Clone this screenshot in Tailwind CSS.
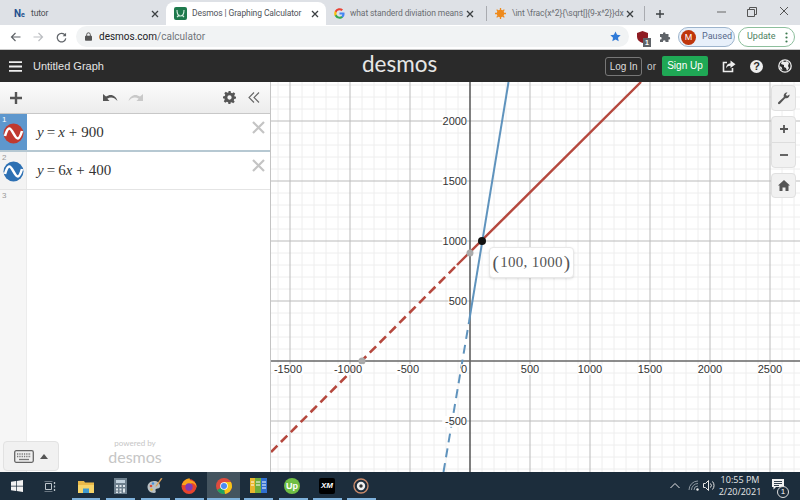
<!DOCTYPE html>
<html lang="en">
<head>
    <meta charset="UTF-8">
    <title>Desmos | Graphing Calculator</title>
    <script src="https://cdn.jsdelivr.net/npm/@tailwindcss/browser@4"></script>
</head>
<body class="w-[800px] h-[500px] overflow-hidden bg-white font-['Liberation_Sans',sans-serif]">
    <div class="flex flex-col h-[500px]">

        <!-- browser tabs -->
        <div class="flex h-[25px] pt-[2px] bg-[#dee1e6] text-[8.500px] tracking-[-.1px] text-[#4a4d52] font-['Roboto',sans-serif]">
            <div class="w-[166px] flex items-center pl-[14px] pr-[7px]">
                <span class="w-[17px] text-[10px] font-bold text-[#24508f]">N<span class="text-[7px]">e</span></span>
                <span class="flex-1">tutor</span>
                <svg width="8" height="8" viewBox="0 0 8 8"><path d="M1 1l6 6M7 1L1 7" stroke="#3c4043" stroke-width="1.3"/></svg>
            </div>
            <div class="w-[160px] flex items-center pl-[8px] pr-[7px] bg-white rounded-t-lg text-[#50535a]">
                <svg class="mr-[5px] shrink-0" width="13" height="13" viewBox="0 0 13 13"><rect width="13" height="13" rx="2" fill="#1f7a4d"/><path d="M3 3c0 5 2 6 3.500 6S10 8 10 3M3 10l2.500-2M10 10L8 8" stroke="#d8efe2" stroke-width="1.100" fill="none"/></svg>
                <span class="flex-1 whitespace-nowrap">Desmos | Graphing Calculator</span>
                <svg class="shrink-0" width="8" height="8" viewBox="0 0 8 8"><path d="M1 1l6 6M7 1L1 7" stroke="#3c4043" stroke-width="1.3"/></svg>
            </div>
            <div class="w-[160px] flex items-center pl-[8px] pr-[8px]">
                <svg class="mr-[5px] shrink-0" width="11" height="11" viewBox="0 0 24 24"><path d="M23 12.300c0-.8-.1-1.600-.2-2.300H12v4.400h6.200a5.300 5.300 0 0 1-2.300 3.500v2.900h3.700c2.200-2 3.400-5 3.400-8.500z" fill="#4285f4"/><path d="M12 23.500c3.100 0 5.700-1 7.600-2.800l-3.700-2.900c-1 .7-2.300 1.100-3.900 1.100-3 0-5.500-2-6.400-4.700H1.800v3A11.500 11.500 0 0 0 12 23.500z" fill="#34a853"/><path d="M5.600 14.200a7 7 0 0 1 0-4.400v-3H1.800a11.500 11.500 0 0 0 0 10.400z" fill="#fbbc05"/><path d="M12 5.100c1.700 0 3.200.6 4.400 1.700l3.300-3.300A11.500 11.500 0 0 0 1.800 6.800l3.800 3C6.500 7.100 9 5.100 12 5.100z" fill="#ea4335"/></svg>
                <span class="flex-1 whitespace-nowrap text-[#6a6d72]">what standerd diviation means</span>
                <svg class="shrink-0 mr-[4px]" width="8" height="8" viewBox="0 0 8 8"><path d="M1 1l6 6M7 1L1 7" stroke="#3c4043" stroke-width="1.3"/></svg>
            </div>
            <div class="w-[159px] flex items-center pl-[8px] pr-[7px] my-[4px] border-l border-r border-[#a9abb0]">
                <svg class="mr-[6px] shrink-0" width="11" height="11" viewBox="0 0 12 12"><circle cx="6" cy="6" r="4" fill="#ee8a1d"/><circle cx="6" cy="6" r="1.500" fill="#f8c88e"/><path d="M6 0v12M0 6h12M1.800 1.800l8.400 8.400M10.200 1.800l-8.400 8.400" stroke="#ee8a1d" stroke-width="1.400"/></svg>
                <span class="flex-1 whitespace-nowrap text-[#6a6d72]">\int \frac{x^2}{\sqrt[]{9-x^2}}dx</span>
                <svg class="shrink-0 mr-[3px]" width="8" height="8" viewBox="0 0 8 8"><path d="M1 1l6 6M7 1L1 7" stroke="#3c4043" stroke-width="1.3"/></svg>
            </div>
            <div class="w-[30px] flex items-center justify-center">
                <svg width="10" height="10" viewBox="0 0 10 10"><path d="M5 1v8M1 5h8" stroke="#3c4043" stroke-width="1.400"/></svg>
            </div>
            <div class="flex-1 flex items-start justify-end pt-[4px]">
                <svg class="mr-[21px] mt-[5px]" width="9" height="2" viewBox="0 0 9 2"><path d="M0 1h9" stroke="#666" stroke-width="1"/></svg>
                <svg class="mr-[22px] mt-[1px]" width="10" height="10" viewBox="0 0 10 10"><path d="M.5 2.500h7v7h-7zM2.500 2.500v-2h7v7h-2" fill="none" stroke="#555" stroke-width="1"/></svg>
                <svg class="mr-[11px]" width="10" height="10" viewBox="0 0 10 10"><path d="M1 1l8 8M9 1L1 9" stroke="#555" stroke-width="1"/></svg>
            </div>
        </div>

        <!-- address bar -->
        <div class="relative flex items-center h-[25px] bg-white border-b border-[#c9c9c9] text-[#5f6368]">
            <svg class="ml-[10px]" width="11" height="10" viewBox="0 0 11 10"><path d="M10.500 5H1.500M5.500 1L1.500 5l4 4" fill="none" stroke="#5f6368" stroke-width="1.200"/></svg>
            <svg class="ml-[12px]" width="11" height="10" viewBox="0 0 11 10"><path d="M.5 5h9M5.500 1l4 4-4 4" fill="none" stroke="#bcbec2" stroke-width="1.200"/></svg>
            <svg class="ml-[12px]" width="11" height="11" viewBox="0 0 12 12"><path d="M10 3.500A4.700 4.700 0 1 0 10.700 7" fill="none" stroke="#5f6368" stroke-width="1.300"/><path d="M11 .8v3.700H7.300z" fill="#5f6368"/></svg>
            <div class="absolute left-[76px] top-[1px] w-[553px] h-[21px] rounded-full bg-[#f1f3f4] flex items-center pl-[9px] font-['Roboto',sans-serif] text-[10px]">
                <svg width="7" height="9" viewBox="0 0 7 9"><path d="M1.700 4V2.600a1.800 1.800 0 0 1 3.600 0V4" fill="none" stroke="#555" stroke-width="1"/><rect y="3.700" width="7" height="5" rx=".8" fill="#555"/></svg>
                <span class="ml-[7px] text-[#202124]">desmos.com<span class="text-[#71757a]">/calculator</span></span>
                <svg class="ml-auto mr-[8px]" width="11" height="11" viewBox="0 0 24 24"><path d="M12 1l3.400 7.300 7.900.9-5.900 5.400 1.600 7.900L12 18.600l-7 3.900 1.600-7.900L.7 9.200l7.900-.9z" fill="#2f7ad8"/></svg>
            </div>
            <div class="ml-auto flex items-center">
                <div class="relative w-[13px] h-[13px] mr-[9px]">
                    <svg width="11" height="12" viewBox="0 0 11 12"><path d="M5.500 0L11 2v4c0 3-2.500 5-5.500 6C2.500 11 0 9 0 6V2z" fill="#8e1c23"/></svg>
                    <span class="absolute left-[6px] top-[7px] w-[8px] h-[9px] bg-[#5f6368] text-white text-[7px] leading-[9px] text-center font-bold">1</span>
                </div>
                <svg class="mr-[7px]" width="12" height="12" viewBox="0 0 12 12"><path d="M1 3h3a1.300 1.300 0 1 1 2.500 0h3v3a1.300 1.300 0 1 1 0 2.500V11H6.500a1.300 1.300 0 1 0-2.500 0H1V8.500a1.300 1.300 0 1 0 0-2.500z" fill="#5f6368"/></svg>
                <div class="flex items-center w-[57px] h-[20px] rounded-full border border-[#9db4cc] bg-[#e8f0fa] pl-[2px]">
                    <span class="w-[15px] h-[15px] rounded-full bg-[#bf360c] text-white text-[9px] leading-[15px] text-center">M</span>
                    <span class="ml-[6px] text-[9px] text-[#56688a] font-['Roboto',sans-serif]">Paused</span>
                </div>
                <div class="flex items-center w-[57px] h-[20px] ml-[3px] mr-[5px] rounded-full border border-[#8dbf9d] pl-[8px] text-[9px] text-[#4e7f5f] font-['Roboto',sans-serif]">
                    Update
                    <svg class="ml-auto mr-[6px]" width="3" height="11" viewBox="0 0 3 11"><circle cx="1.500" cy="1.500" r="1.100" fill="#3c7a50"/><circle cx="1.500" cy="5.500" r="1.100" fill="#3c7a50"/><circle cx="1.500" cy="9.500" r="1.100" fill="#3c7a50"/></svg>
                </div>
            </div>
        </div>

        <!-- desmos header -->
        <div class="relative flex items-center h-[32px] bg-[#2a2a2a] text-white">
            <svg class="ml-[9px]" width="13" height="11" viewBox="0 0 13 11"><path d="M0 1.200h13M0 5.500h13M0 9.800h13" stroke="#eee" stroke-width="1.800"/></svg>
            <span class="ml-[11px] text-[11px] text-[#e4e4e4]">Untitled Graph</span>
            <span class="absolute left-[362px] top-0 text-[22.500px] leading-[28px] font-normal font-['Lato',sans-serif] text-[#e6e6e6]">desmos</span>
            <div class="ml-auto flex items-center">
                <span class="w-[37px] h-[19px] rounded-[3px] border border-[#777] text-[10px] leading-[17px] text-center text-[#ddd]">Log In</span>
                <span class="ml-[5px] text-[10px] text-[#ccc]">or</span>
                <span class="ml-[6px] w-[46px] h-[20px] rounded-[2px] bg-[#1fa855] text-[10px] leading-[20px] text-center">Sign Up</span>
                <svg class="ml-[14px]" width="14" height="13" viewBox="0 0 14 13"><path d="M5 2.500H1.500v9h9V8" fill="none" stroke="#eee" stroke-width="1.600"/><path d="M8.500.5l5 3.700-5 3.800V5.800C6.500 5.800 5 6.500 4 8.500c0-3 1.700-5 4.500-5.200z" fill="#eee"/></svg>
                <span class="ml-[14px] w-[13px] h-[13px] rounded-full bg-[#eee] text-[#2a2a2a] text-[11px] leading-[13px] text-center font-bold">?</span>
                <svg class="ml-[15px] mr-[8px]" width="14" height="14" viewBox="0 0 14 14"><circle cx="7" cy="7" r="6.200" fill="none" stroke="#eee" stroke-width="1.300"/><path d="M4 2l3 1 2-1 2 2-1 3 1 2-2 3-1-3-2-1V6L3 5zM1.500 7l2 1 1 3-2-1z" fill="#eee"/></svg>
            </div>
        </div>

        <!-- calculator -->
        <div class="flex-1 flex min-h-0">
            <div class="w-[271px] flex flex-col relative border-r border-[#c4c4c4]">
                <div class="flex items-center h-[32px] bg-gradient-to-b from-[#fcfcfc] to-[#ececec] border-b border-[#c8c8c8] text-[#555]">
                    <svg class="ml-[10px]" width="12" height="12" viewBox="0 0 12 12"><path d="M6 0v12M0 6h12" stroke="#555" stroke-width="2.400"/></svg>
                    <svg class="ml-[81px]" width="15" height="9" viewBox="0 0 15 9"><path d="M0 1v7h6.500L4.300 5.800C7.500 3.700 11 4.200 14.500 8 13 2.500 8 0 3 3.500z" fill="#555"/></svg>
                    <svg class="ml-[10px]" width="15" height="9" viewBox="0 0 15 9"><path d="M15 1v7H8.500l2.200-2.200C7.500 3.700 4 4.200.5 8 2 2.500 7 0 12 3.500z" fill="#c9c9c9"/></svg>
                    <svg class="ml-[80px]" width="13" height="13" viewBox="0 0 24 24"><path d="M10 0h4l.6 3.200 2.500 1 2.700-1.800 2.800 2.800-1.800 2.700 1 2.500L24 10v4l-3.200.6-1 2.500 1.800 2.700-2.800 2.800-2.700-1.800-2.500 1L14 24h-4l-.6-3.200-2.500-1-2.700 1.800-2.800-2.800 1.800-2.700-1-2.500L0 14v-4l3.200-.6 1-2.500-1.800-2.700 2.800-2.800 2.700 1.800 2.500-1zM12 8a4 4 0 1 0 0 8 4 4 0 0 0 0-8z" fill="#555" fill-rule="evenodd"/></svg>
                    <svg class="ml-[12px]" width="12" height="11" viewBox="0 0 12 11"><path d="M6 .5L1 5.500l5 5M11 .5L6 5.500l5 5" fill="none" stroke="#666" stroke-width="1.100"/></svg>
                </div>
                <div class="flex h-[38px] border-b-2 border-[#b6c8d2]">
                    <div class="w-[27px] bg-[#5e97cd] relative">
                        <span class="absolute left-[2px] top-0 text-[8px] text-white">1</span>
                        <svg class="absolute left-[3px] top-[9px]" width="21" height="21" viewBox="0 0 21 21"><circle cx="10.500" cy="10.500" r="10" fill="#c0392f"/><path d="M2 13c3-10 5-9 8.500-2.500S16 18 19 8" fill="none" stroke="#fff" stroke-width="2.600"/></svg>
                    </div>
                    <div class="flex-1 flex items-center pl-[10px] text-[15px] text-[#333] font-['Liberation_Serif',serif]"><i>y</i><span class="mx-[3px]">=</span><i>x</i><span class="mx-[4px]">+</span>900</div>
                    <svg class="mt-[7px] mr-[5px]" width="13" height="13" viewBox="0 0 13 13"><path d="M1 1l11 11M12 1L1 12" stroke="#c4c4c4" stroke-width="2.200"/></svg>
                </div>
                <div class="flex h-[38px] border-b border-[#e4e4e4]">
                    <div class="w-[27px] bg-[#f3f3f3] border-r border-[#e8e8e8] relative">
                        <span class="absolute left-[2px] top-0 text-[8px] text-[#999]">2</span>
                        <svg class="absolute left-[3px] top-[9px]" width="21" height="21" viewBox="0 0 21 21"><circle cx="10.500" cy="10.500" r="10" fill="#2d70b3"/><path d="M2 13c3-10 5-9 8.500-2.500S16 18 19 8" fill="none" stroke="#fff" stroke-width="2.600"/></svg>
                    </div>
                    <div class="flex-1 flex items-center pl-[10px] text-[15px] text-[#333] font-['Liberation_Serif',serif]"><i>y</i><span class="mx-[3px]">=</span>6<i>x</i><span class="mx-[4px]">+</span>400</div>
                    <svg class="mt-[7px] mr-[5px]" width="13" height="13" viewBox="0 0 13 13"><path d="M1 1l11 11M12 1L1 12" stroke="#c4c4c4" stroke-width="2.200"/></svg>
                </div>
                <div class="flex-1 flex">
                    <div class="w-[27px] bg-[#f6f6f6] border-r border-[#ececec] relative">
                        <span class="absolute left-[2px] top-0 text-[8px] text-[#999]">3</span>
                    </div>
                </div>
                <div class="absolute left-[3px] bottom-[1px] w-[56px] h-[30px] rounded-[4px] bg-[#f1f1f1] border border-[#e2e2e2] flex items-center pl-[10px]">
                    <svg width="20" height="13" viewBox="0 0 20 13"><rect x=".7" y=".7" width="18.600" height="11.600" rx="1.500" fill="#eee" stroke="#666" stroke-width="1.300"/><path d="M3 4h14M3 6.500h14" stroke="#777" stroke-width="1.300" stroke-dasharray="1.300 1"/><path d="M5 9.500h10" stroke="#777" stroke-width="1.300"/></svg>
                    <svg class="ml-[6px]" width="8" height="5" viewBox="0 0 8 5"><path d="M4 0l4 5H0z" fill="#555"/></svg>
                </div>
                <div class="absolute left-[105px] bottom-[6px] w-[60px] text-center text-[#c6c6c6] font-['Lato',sans-serif]">
                    <div class="text-[8px] leading-[10px]">powered by</div>
                    <div class="text-[16px] leading-[19px] -mt-[1px]">desmos</div>
                </div>
            </div>

            <!-- graph -->
            <div class="flex-1 relative overflow-hidden">
                <svg id="graph" class="block" width="529" height="390" viewBox="271 82 529 390"></svg>
                <div class="absolute left-[218px] top-[165px] w-[85px] h-[31px] rounded-[4px] bg-white border border-[#e8e8e8] shadow-sm flex items-center justify-center text-[15px] tracking-[.3px] text-[#555] font-['Liberation_Serif',serif]"><span class="text-[19px] mr-[1px] leading-none">(</span>100, 1000<span class="text-[19px] ml-[1px] leading-none">)</span></div>
                <div class="absolute right-[4px] top-[3px] flex flex-col">
                    <div class="w-[25px] h-[26px] rounded-[4px] bg-[#f1f1f1] border border-[#e0e0e0] flex items-center justify-center">
                        <svg width="13" height="13" viewBox="0 0 13 13"><path d="M12.500 2.500c.5 2-1.500 4.500-4.300 3.700L3 11.800c-1.200 1.200-2.800-.4-1.700-1.600L6.900 5C6 2.200 8.500.2 10.500.6L8.800 2.500 10 4z" fill="#555"/></svg>
                    </div>
                    <div class="mt-[5px] w-[25px] h-[52px] rounded-[4px] bg-[#f1f1f1] border border-[#e0e0e0] flex flex-col">
                        <div class="flex-1 flex items-center justify-center border-b border-[#ddd]"><svg width="10" height="10" viewBox="0 0 10 10"><path d="M5 1v8M1 5h8" stroke="#555" stroke-width="1.800"/></svg></div>
                        <div class="flex-1 flex items-center justify-center"><svg width="10" height="10" viewBox="0 0 10 10"><path d="M1 5h8" stroke="#555" stroke-width="1.800"/></svg></div>
                    </div>
                    <div class="mt-[5px] w-[25px] h-[25px] rounded-[4px] bg-[#f1f1f1] border border-[#e0e0e0] flex items-center justify-center">
                        <svg width="12" height="11" viewBox="0 0 12 11"><path d="M6 0l6 5.500h-1.500V11H7.500V7.500h-3V11H1.500V5.500H0z" fill="#555"/></svg>
                    </div>
                </div>
            </div>
        </div>

        <!-- taskbar -->
        <div id="taskbar" class="relative flex items-center h-[28px] bg-[#1c2d3c] text-white">
            <svg class="ml-[11px]" width="12" height="12" viewBox="0 0 12 12"><path d="M0 1.800L5 1v4.700H0zM5.700.9L12 0v5.700H5.700zM0 6.400h5v4.700l-5-.8zM5.700 6.400H12V12l-6.300-.9z" fill="#f2f2f2"/></svg>
            <svg class="ml-[21px]" width="12" height="11" viewBox="0 0 12 11"><path d="M.5 0h8M.5 11h8M1.500 2.500h6v6h-6z" fill="none" stroke="#bcc4cb" stroke-width="1"/><path d="M10.500 1v2M10.500 4.500v2M10.500 8v2" stroke="#bcc4cb" stroke-width="1.300"/></svg>
            <svg class="ml-[22px]" width="16" height="13" viewBox="0 0 16 13"><path d="M0 1h6l1 1.500h9V13H0z" fill="#e9b949"/><path d="M0 5h16v8H0z" fill="#f6d469"/><path d="M5 8.500h6V13H5z" fill="#3f9bd0"/></svg>
            <svg class="ml-[20px]" width="13" height="16" viewBox="0 0 13 16"><rect width="13" height="16" fill="#6d7f8d"/><rect x="2" y="2" width="9" height="3" fill="#c3d3de"/><path d="M2 7h2v2H2zM5.500 7h2v2h-2zM9 7h2v2H9zM2 10.500h2v2H2zM5.500 10.500h2v2h-2zM9 10.500h2v4H9zM2 13.500h2V15H2zM5.500 13.500h2V15h-2z" fill="#dfe7ec"/></svg>
            <svg class="ml-[20px]" width="16" height="16" viewBox="0 0 16 16"><path d="M7 3C3 3 .5 6 .5 9S3 15 7 15c2 0 2-1.500 1.500-2.500S9 10.500 10.500 10.500c2 0 2.500-1 2.500-2.500C13 5 10.500 3 7 3z" fill="#b8c0c4"/><circle cx="4" cy="8" r="1.300" fill="#d64a3b"/><circle cx="6" cy="5.500" r="1.300" fill="#4a8fd6"/><circle cx="4.500" cy="11.500" r="1.300" fill="#e8b93c"/><path d="M15.500.5L10 8l-1.500 1L9 7.300 14 0z" fill="#d9a05a"/></svg>
            <svg class="ml-[18px]" width="16" height="16" viewBox="0 0 16 16"><circle cx="8" cy="8.500" r="7.500" fill="#e8442d"/><path d="M1 7C2 2.500 6 0 9 .5 8 2 9.500 2.500 11.500 3 14 4 16 7 15.500 10 15 6 12 5 10 5c1 1 1 2 0 2.500" fill="#f9a51b"/><circle cx="8" cy="9" r="3.700" fill="#7f3bb8"/></svg>
            <div class="absolute left-[207px] top-0 w-[33px] h-[28px] bg-[#44545f] flex items-center justify-center">
                <svg width="16" height="16" viewBox="0 0 16 16"><circle cx="8" cy="8" r="8" fill="#de4b3e"/><path d="M8 8L1.100 12A8 8 0 0 0 9 15.900z" fill="#1da462"/><path d="M8 8h7.900a8 8 0 0 1-6.900 7.900L8 8z" fill="#f5c518"/><path d="M8 4h6.900a8 8 0 0 1 .8 6L8 8z" fill="#f5c518"/><circle cx="8" cy="8" r="3.800" fill="#fff"/><circle cx="8" cy="8" r="3" fill="#4a8af4"/></svg>
            </div>
            <svg class="absolute left-[250px] top-[6px]" width="17" height="15" viewBox="0 0 17 15"><rect width="5" height="15" fill="#e8b52d"/><rect x="5" width="6" height="15" fill="#6fae3d"/><rect x="11" width="6" height="15" fill="#2f6fd0"/><path d="M1 4h3M1 7h3M6 4h4M6 7h4M12 4h4M12 7h4M12 10h4" stroke="#fff" stroke-width="1"/></svg>
            <div class="absolute left-[284px] top-[6px] w-[16px] h-[16px] rounded-full bg-[#6fbe44] text-[9px] leading-[16px] text-center font-bold">Up</div>
            <div class="absolute left-[319px] top-[6px] w-[16px] h-[16px] rounded-[2px] bg-black text-[8px] leading-[16px] text-center font-bold italic">XM</div>
            <svg class="absolute left-[353px] top-[6px]" width="16" height="16" viewBox="0 0 16 16"><circle cx="8" cy="8" r="7" fill="none" stroke="#c98a6a" stroke-width="1.400"/><circle cx="8" cy="8" r="4.200" fill="#eee"/><circle cx="8" cy="8" r="1.700" fill="#333"/></svg>
            <div id="task-marks"></div>

            <svg class="absolute left-[670px] top-[10px]" width="10" height="7" viewBox="0 0 10 7"><path d="M.5 6L5 1.500 9.500 6" fill="none" stroke="#e6e6e6" stroke-width="1"/></svg>
            <svg class="absolute left-[688px] top-[8px]" width="11" height="11" viewBox="0 0 11 11"><path d="M1 10a9 9 0 0 1 9-9M3.500 10A6.500 6.500 0 0 1 10 3.500M6 10a4 4 0 0 1 4-4" fill="none" stroke="#8d98a1" stroke-width="1"/><circle cx="9.500" cy="9.500" r="1.200" fill="#e6e6e6"/></svg>
            <svg class="absolute left-[703px] top-[8px]" width="12" height="11" viewBox="0 0 12 11"><path d="M.5 3.500h2l3-3v10l-3-3h-2z" fill="none" stroke="#e6e6e6" stroke-width="1"/><path d="M7.500 3.500a3 3 0 0 1 0 4M9.500 1.500a6 6 0 0 1 0 8" fill="none" stroke="#e6e6e6" stroke-width="1"/></svg>
            <div class="absolute left-[717px] top-0 w-[46px] text-center text-[9px] leading-[12px] pt-[2px] text-[#e6e6e6] font-['Open_Sans',sans-serif]">
                <div>10:55 PM</div>
                <div>2/20/2021</div>
            </div>
            <svg class="absolute left-[772px] top-[7px]" width="12" height="11" viewBox="0 0 12 11"><path d="M0 0h12v8H4L1.500 10.500V8H0z" fill="#f2f2f2"/><path d="M2 2.500h8M2 4.500h8M2 6.500h5" stroke="#1c2d3c" stroke-width=".9"/></svg>
            <span class="absolute left-[777px] top-[14px] w-[12px] h-[12px] rounded-full bg-[#1c2d3c] border border-[#ddd] text-[8px] leading-[10px] text-center">1</span>
        </div>
    </div>

    <script>
        // graph origin and scale, read off the reference
        const originX = 470, originY = 361, pxPerUnit = 0.12;
        const left = 271, right = 800, top_ = 82, bottom = 472;
        const sx = x => originX + x * pxPerUnit;
        const sy = y => originY - y * pxPerUnit;

        let out = '';
        const line = (x1, y1, x2, y2, color, w, extra = '') =>
            `<line x1="${x1}" y1="${y1}" x2="${x2}" y2="${y2}" stroke="${color}" stroke-width="${w}" ${extra}/>`;

        // minor lines, then major, then axes
        for (let v = -2000; v <= 3000; v += 100) {
            if (v % 500 !== 0) out += line(sx(v), top_, sx(v), bottom, '#eeeeee', 1);
            if (v % 500 !== 0) out += line(left, sy(v), right, sy(v), '#eeeeee', 1);
        }
        for (let v = -2000; v <= 3000; v += 500) {
            if (v === 0) continue;
            out += line(sx(v), top_, sx(v), bottom, '#bbbbbb', 1);
            out += line(left, sy(v), right, sy(v), '#bbbbbb', 1);
        }
        out += line(originX, top_, originX, bottom, '#555', 1.5);
        out += line(left, originY, right, originY, '#666', 1.5);

        // curves: dashed where the reference is dashed, solid past that
        const red = '#b5483e', blue = '#5f93bd';
        out += line(sx(-1658), sy(-758), 457, 265, red, 2.6, 'stroke-dasharray="9 5"');
        out += line(457, 265, sx(1425), sy(2325), red, 2.4);
        out += line(443.500, 472, 469, 322, blue, 2, 'stroke-dasharray="9 6"');
        out += line(469, 322, sx(321), sy(2325), blue, 2);

        // points
        out += `<circle cx="${sx(0)}" cy="${sy(900)}" r="3.500" fill="#aaa"/>`;
        out += `<circle cx="${sx(-900)}" cy="${sy(0)}" r="3.500" fill="#aaa"/>`;
        out += `<circle cx="${sx(100)}" cy="${sy(1000)}" r="4" fill="#111"/>`;

        // axis labels on a white patch that hides the grid behind them
        const label = (x, y, text, anchor) => {
            const w = String(text).length * 6.200;
            const rx = anchor === 'end' ? x - w : x - w / 2;
            return `<rect x="${rx}" y="${y - 9}" width="${w}" height="11" fill="#fff" fill-opacity=".85"/>` +
                `<text x="${x}" y="${y}" text-anchor="${anchor}" font-family="Liberation Sans" font-size="11" fill="#333333">${text}</text>`;
        };
        [-1500, -1000, -500, 500, 1000, 1500, 2000, 2500].forEach(v => {
            out += label(sx(v) - (v < 0 ? 2 : 0), originY + 12, v, 'middle');
        });
        [2000, 1500, 1000, 500, -500].forEach(v => {
            out += label(originX - 3, sy(v) + 4, v, 'end');
        });
        out += label(originX - 3, originY + 12, '0', 'end');
        document.getElementById('graph').innerHTML = out;

        // little blue bars under the pinned taskbar apps
        const marks = [[72, 28], [106, 29], [141, 29], [175, 29], [207, 33], [244, 29], [279, 29], [313, 29], [347, 29]];
        document.getElementById('task-marks').innerHTML = marks.map(([x, w]) =>
            `<div style="position:absolute;left:${x}px;width:${w}px;bottom:0;height:2px;background:#7fb2dc"></div>`).join('');
    </script>
</body>
</html>
